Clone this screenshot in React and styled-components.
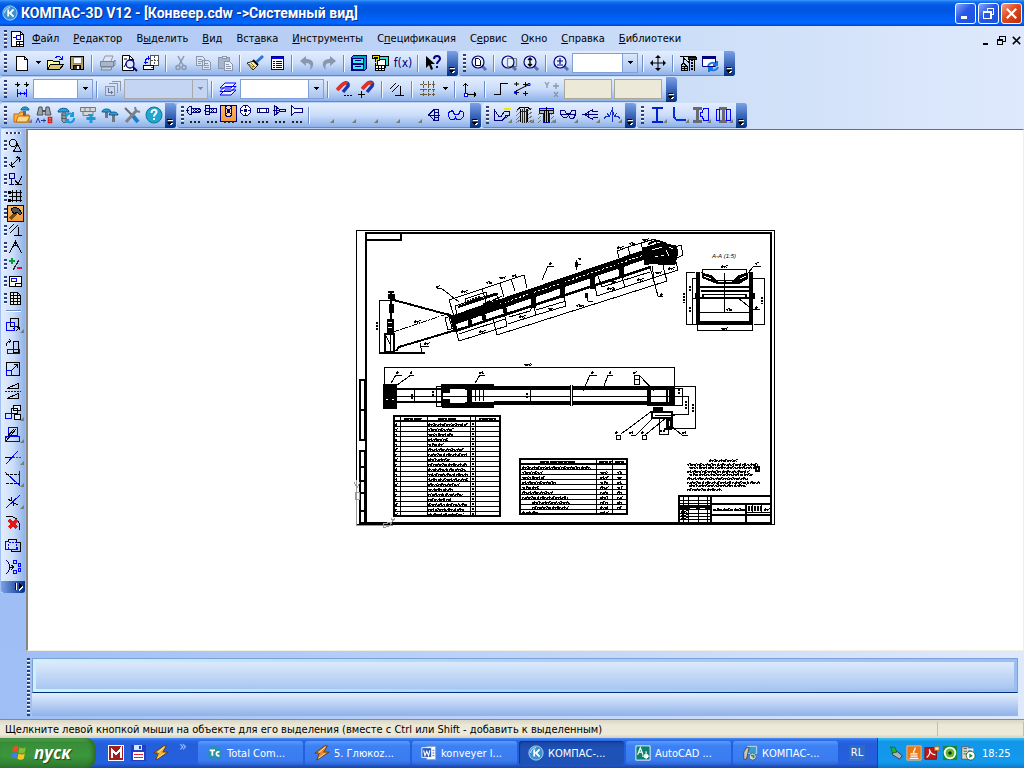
import React from "react";
import styled, { createGlobalStyle, css } from "styled-components";

const GlobalStyle = createGlobalStyle`
  * { box-sizing: border-box; }
  body {
    margin: 0;
    font-family: "DejaVu Sans Condensed", "Noto Sans", sans-serif;
    font-size: 11px;
    color: #000;
    cursor: default;
  }
  button, input, select { font: inherit; color: inherit; }
`;

/* ---------- icons, all on an 18px grid ---------- */

const Svg = styled.svg`
  display: block;
  flex: none;
  overflow: visible;
`;

const Icon = ({ size = 18, smooth, narrow, children }) => (
  <Svg width={narrow ? 15 : size} height={narrow ? 15 : size} viewBox={narrow ? "2 2 15 15" : "0 0 18 18"}
    fill="none" stroke="#000" shapeRendering={smooth ? "auto" : "crispEdges"} aria-hidden="true">
    {children}
  </Svg>
);

const NAVY = "#000080";
const BLUE = "#0000ff";
const GRAY = "#8b97ad";

const lens = (
  <>
    <path d="M11 11l5 5" stroke="#5b6fae" strokeWidth="3" />
    <circle cx="8" cy="8" r="6" fill="#e4f0ff" stroke={NAVY} strokeWidth="1.2" />
  </>
);

const screw = (
  <>
    <path d="M1 6c0-5 11-5 11 0z" fill="#2a9fd8" stroke="#0a5a94" />
    <path d="M5 7h4v8l-2 2-2-2z" fill="#9aa4ad" stroke="#50575e" />
    <path d="M4 9l6 1M4 12l6 1" stroke="#50575e" />
  </>
);

const icons = {
  doc: <Icon><path d="M2.500 1.500h9l3 3v12h-12z" fill="#fff" /><path d="M11.500 1.500v3h3M7.500 11.500h7v5h-7zM7 14.500h7M10.500 11v5" /><path d="M4 7.500h3m0-2h4v4h-4z" stroke={BLUE} /></Icon>,
  newDoc: <Icon><path d="M3.500 2.500h8l3 3v11h-11z" fill="#fff" /><path d="M11.500 2.500v3h3" /></Icon>,
  open: <Icon><path d="M1.500 15.500v-9h5l1 1h6v3" fill="#ffff99" stroke="#000" /><path d="M1.500 15.500l3-5h13l-4 5z" fill="#d8c878" /><path d="M9.500 4c2-3 5-2 6 1M13 5h3V2" stroke={BLUE} /></Icon>,
  save: <Icon><path d="M2.500 2.500h13v13h-12l-1-1z" fill="#b8a05c" /><path d="M5 3h8v6H5z" fill="#fff" stroke="#888" /><path d="M5.500 11.500h7v4h-7z" fill="#333" /><path d="M10 12v3" stroke="#fff" strokeWidth="2" /></Icon>,
  print: <Icon smooth><path d="M5 7l2-5h8l-2 5" fill="#dfe6f3" stroke={GRAY} /><path d="M2.500 7.500h13v5h-13z" fill="#a9b5cb" stroke="#77849c" /><path d="M4 13h10l-1 3H3z" fill="#c4cfe2" stroke="#77849c" /><path d="M16 8l1-2v5l-2 2" stroke="#77849c" /></Icon>,
  preview: <Icon smooth><path d="M2.500 1.500h7l4 4v11h-11z" fill="#fff" /><path d="M9.500 1.500v4h4M4 5h3M4 13l3-5" /><circle cx="10" cy="10" r="4" fill="#d8e8ff" stroke={NAVY} strokeWidth="1.300" /><path d="M13 13l4 4" stroke={NAVY} strokeWidth="2" /></Icon>,
  sheets: <Icon><path d="M8.500 1.500h8v10h-8z" fill="#fff" stroke="#555" /><path d="M12.500 1.500v10M8.500 6.500h8" stroke="#555" strokeDasharray="2 1" /><path d="M1.500 11.500h10v4h-10z" fill="#fff" /><path d="M9 13.500h2" stroke="#e00" /><path d="M3.500 10V7c0-2 1-3 4-3M6 2v4M1.500 8h4" stroke={BLUE} /></Icon>,
  cut: <Icon smooth><path d="M6 2l5 9M12 2L7 11" stroke={GRAY} strokeWidth="1.500" /><circle cx="6" cy="13.500" r="2" stroke={GRAY} strokeWidth="1.500" /><circle cx="12" cy="13.500" r="2" stroke={GRAY} strokeWidth="1.500" /></Icon>,
  copy: <Icon><path d="M2.500 2.500h6l2 2v7h-8zM8.500 6.500h6l2 2v7h-8z" fill="#dbe6f7" stroke={GRAY} /><path d="M4 5.500h4M4 7.500h4M4 9.500h3M10 9.500h4M10 11.500h5M10 13.500h5" stroke={GRAY} /></Icon>,
  paste: <Icon><path d="M2.500 3.500h11v11h-11z" fill="#a9b5cb" stroke={GRAY} /><path d="M6 2h4v2H6zM8.500 7.500h5l3 3v6h-8z" fill="#e6eefb" stroke={GRAY} /><path d="M10 10.500h3M10 12.500h5M10 14.500h5" stroke={GRAY} /></Icon>,
  brush: <Icon smooth><path d="M1 9l7-2 4 4-5 5z" fill="#fff3c0" stroke="#222" /><path d="M3 10l4 3M5 9l4 4M6 15l2-3" stroke="#907010" /><path d="M7 6l5 5" strokeWidth="2" /><path d="M10.500 8L17 2" stroke="#2a75d8" strokeWidth="3" /></Icon>,
  props: <Icon><path d="M3.500 2.500h12v13h-12z" fill="#fff" stroke={NAVY} /><path d="M4 4h11" stroke={BLUE} strokeWidth="2" /><path d="M5 7.500h2M5 9.500h2M5 11.500h2M5 13.500h2M8 7.500h6M8 9.500h6M8 11.500h6M8 13.500h6" stroke={NAVY} /></Icon>,
  undo: <Icon smooth><path d="M2 7l6-5v3c5 0 8 2 7 7-1 2-2 3-3 4 1-4 1-7-4-7v3z" fill={GRAY} stroke="none" /></Icon>,
  redo: <Icon smooth><path d="M16 7l-6-5v3C5 5 2 7 3 12c1 2 2 3 3 4-1-4-1-7 4-7v3z" fill={GRAY} stroke="none" /></Icon>,
  cabinet: <Icon><path d="M1.500 3.500l2-2h13v13l-2 2h-13z" fill="#00a0b0" stroke={NAVY} /><path d="M2.500 4.500h11v5h-11zM2.500 10.500h11v5h-11z" fill="#2ff0f0" stroke={NAVY} /><path d="M5 6.500h6M5 12.500h6" stroke={NAVY} /></Icon>,
  vars: <Icon><path d="M7.500 2.500h9v9h-9z" fill="#2ee0e0" /><path d="M5.500 5.500h8v8h-8z" fill="#fff" /><path d="M3.500 11.500h9v5h-9zM3.500 14.500h9M6.500 11.500v5M9.500 11.500v5" fill="#fff" /><path d="M1 5V2h5v3H4v3M4 9v2" stroke="#000" strokeWidth="3" /><path d="M1 4V2h5v3H4v3M4 9v2" stroke="#f0e000" /></Icon>,
  helpArrow: <Icon smooth><path d="M2 2v12l3-3 2 5 2-1-2-5h4z" fill="#000" stroke="none" /><path d="M10 5c0-4 6-4 6 0 0 2-3 2-3 5M13 12v2" stroke={NAVY} strokeWidth="2" /></Icon>,
  zoomDoc: <Icon smooth>{lens}<path d="M5.500 4.500h3l2 2v5h-5z" fill="#fff" /></Icon>,
  zoomArea: <Icon smooth>{lens}<path d="M7.500 4.500h9v8h-9z" stroke="#222" strokeWidth="1.200" strokeDasharray="1 1" /></Icon>,
  zoomDyn: <Icon smooth>{lens}<path d="M8 4v8M6 6l2-2 2 2M6 10l2 2 2-2" strokeWidth="1.400" /></Icon>,
  zoomPlus: <Icon smooth>{lens}<path d="M5 7h6M8 4v6M5 11h6" stroke={NAVY} strokeWidth="1.200" /></Icon>,
  pan: <Icon smooth><path d="M9 2v14M2 9h14" /><path d="M9 1l3 3H6zM9 17l3-3H6zM1 9l3-3v6zM17 9l-3-3v6z" fill="#000" stroke="none" /></Icon>,
  crane: <Icon><path d="M1 2.500h16M10.500 3v14M15.500 3v14M4.500 3v6M4 4l7 5" /><path d="M9 3h8v2H9z" fill="#333" /><path d="M13 5v12" strokeDasharray="2 1" strokeWidth="2" /><path d="M2.500 12.500h6v4h-6zM5.500 12.500v4M2 14.500h7M4 9l-2 3M4 9l4 3" /></Icon>,
  refreshWin: <Icon smooth><path d="M1.500 2.500h13v10h-13z" fill="#fff" stroke={NAVY} /><path d="M1 3.500h14" stroke="#000080" strokeWidth="3" /><path d="M7 12a5 5 0 0 1 8-2M17 13a5 5 0 0 1-8 2M16 7v4h-4M8 18v-4h4" stroke="#1878e0" strokeWidth="2" /></Icon>,
  step: <Icon><path d="M4.500 2v5M2 4.500h5M13.500 2v5M11 4.500h5M4 4h1v1H4zM13 4h1v1h-1z" /><path d="M4.500 9v8M13.500 9v8M5 13.500h8M7.500 12v3M11.500 12v3" stroke={BLUE} /></Icon>,
  views: <Icon><path d="M7.500 1.500h9v9M4.500 3.500h9v9" stroke={GRAY} /><path d="M1.500 6.500h9v9h-9z" fill="#c8d6ef" stroke={GRAY} /><path d="M4.500 8v4.500h4M7.500 11v3" stroke="#66728a" /></Icon>,
  layers: <Icon smooth><path d="M6 10h11l-5 5H1zM6 6.500h11l-5 5H1zM6 3h11l-5 5H1z" fill="#eef4ff" stroke={BLUE} /></Icon>,
  magnetDots: <Icon smooth><path d="M3 9l4-4c3-3 7-3 6 1l-5 6" stroke="#1838b0" strokeWidth="3.500" /><path d="M2 10l5-5c2-2 4-2 5-1" stroke="#e83020" strokeWidth="3.500" /><path d="M9 15.500h2M12 15.500h2M15 15.500h2" /></Icon>,
  magnetPlus: <Icon smooth><path d="M6 8l4-4c3-3 7-2 5 2l-5 6" stroke="#1838b0" strokeWidth="3.500" /><path d="M5 9l5-5c2-2 4-1 5 0" stroke="#e83020" strokeWidth="3.500" /><path d="M4.500 11v7M1 14.500h7" /></Icon>,
  parallel: <Icon smooth><path d="M2 9l6-6M4 12l7-7M12.500 6v9M7 15.500h9" /></Icon>,
  grid: <Icon><path d="M1 4.500h16M1 9.500h16M1 14.500h16M4.500 1v16M9.500 1v16M14.500 1v16" stroke="#685a3a" strokeDasharray="3 1" /></Icon>,
  axes: <Icon><path d="M4.500 3v12M4 14.500h11M2 5.500h1M3 4.500h3M6 5.500h1M13.500 12v5M14.500 13v3" /><path d="M3.500 13.500h3v3h-3z" fill="#fff" stroke={BLUE} /></Icon>,
  ortho: <Icon><path d="M3 14.500h6.500v-11h7" /></Icon>,
  snaps: <Icon smooth><path d="M3.500 2v4M1 4h5M12.500 2v5M10 4.500h5M3.500 10v5M1 12.500h5M12.500 11v5M10 13.500h5" /><path d="M3 11l12-6" /><path d="M15 3.500h2v2h-2zM1.500 11.500h2v2h-2z" stroke={BLUE} /></Icon>,
  xy: <Icon smooth><path d="M1 2l2 3 2-3M3 5v3M12 3v6M9 6h6M10 12l4 5M14 12l-4 5" stroke={GRAY} strokeWidth="1.300" /></Icon>,
  libFolder: <Icon smooth><path d="M1 16V8h5l1-2h4v3h5v7z" fill="#ffb14a" stroke="#c56a00" /><path d="M11.500 5v6" stroke="#666" strokeWidth="3" /><path d="M8 4c0-4 8-4 8 0z" fill="#2a9fd8" stroke="#0a5a94" /><path d="M3 16l2-6h12l-3 6z" fill="#ffd78a" stroke="#c56a00" /></Icon>,
  binoculars: <Icon smooth><path d="M4 1h3l1 8H2zM11 1h3l2 8h-6z" fill="#9ba1a9" stroke="#4c525b" /><path d="M7 5h4" stroke="#4c525b" strokeWidth="2" /><path d="M1 17l2-5 2 5M6 14.500h5M9 12.500v4" stroke="#1838b0" /><path d="M13.500 11.500h3v5h-3zM13 14h3" stroke="#e02010" strokeWidth="1.600" /></Icon>,
  screwRefresh: <Icon smooth>{screw}<path d="M9 11a4 4 0 0 1 7-2M17 12a4 4 0 0 1-7 3M16 6v4h-3M9 17v-3h3" stroke="#1c98d8" strokeWidth="2" /></Icon>,
  bricks: <Icon smooth><path d="M1.500 1.500h15v4h-15zM6 1.500v4M11 1.500v4M4 5.500h10v4H4z" fill="#d4d6d8" stroke="#74797f" /><path d="M9 9h3v8" stroke="#74797f" strokeWidth="2" /><path d="M12 8v9M7.500 12.500h9" stroke="#1c98d8" strokeWidth="3" /></Icon>,
  screws: <Icon smooth><path d="M5.500 6v6M12.500 9v7" stroke="#70777e" strokeWidth="3" /><path d="M1 6c0-4 9-4 9 0zM8 9c0-4 9-4 9 0z" fill="#2a9fd8" stroke="#0a5a94" /></Icon>,
  tools: <Icon smooth><path d="M2 2l7 7" stroke="#666c74" strokeWidth="2" /><path d="M10 10l5 6" stroke="#1c80c8" strokeWidth="4" /><path d="M3 16L14 4" stroke="#7b828a" strokeWidth="3" /><path d="M12 1l1 4 4 1" stroke="#7b828a" strokeWidth="2" /></Icon>,
  help: <Icon smooth><circle cx="9" cy="9" r="8" fill="#20a8d0" stroke="#0c7898" /><path d="M6.500 7c0-4 5-4 5-1 0 2-2.500 2-2.500 4.500M9 12v2" stroke="#fff" strokeWidth="2" /></Icon>,
};

const boltShapes = [
  <path key="p" d="M6.500 2.500h-2l-2 2v4l2 2h2zM6.500 4.500h8l1 2-1 2h-8M1 6.500h3M8 5l3 3M11 5l3 3M11 5l-3 3M14 5l-3 3" stroke={NAVY} />,
  <path key="p" d="M3.500 1.500h4v9h-4zM3 4.500h4M3 7.500h4M7.500 4.500h7v4h-7M9 5l3 3M12 5l-3 3M2 6.500h2" stroke={NAVY} />,
  <path key="p" d="M7.500 1.500h4l1 2v7l-1 2h-4l-1-2v-7zM7 4l5 6M12 4l-5 6M8.500 5.500h2v3h-2z" stroke={NAVY} fill="#f7d8a0" />,
  <g key="p" stroke={NAVY}><path d="M7.500 1.500h4l3 3v4l-3 3h-4l-3-3v-4z" fill="#fff" /><path d="M4 6.500h3M12 6.500h3M9.500 1v3M9.500 9v3" /><path d="M8.500 5.500h2v2h-2z" fill={NAVY} /></g>,
  <path key="p" d="M4.500 4.500h11v4h-11zM6.500 4.500v4M13.500 4.500v4" stroke={NAVY} fill="#fff" />,
  <path key="p" d="M4.500 1.500v10l5-4h6v-2h-6zM3 6.500h7M6.500 3v7" stroke={NAVY} />,
  <path key="p" d="M4.500 1.500l3 3h8v4h-8l-3 3z" stroke={NAVY} fill="#eef4ff" />,
];

const gearShapes = [
  <g key="p" stroke={NAVY}><path d="M1.500 3v11h8l4-5h3V5h-5l-3 5h-3l-4-6M9.500 14l7-5" /><path d="M11 3h7" stroke="#f0e800" strokeWidth="2" /></g>,
  <g key="p"><path d="M1 6l4-4M1 10l4-4M1 14l4-4M1 17l4-3M13 5l4-3M13 9l4-3M13 13l4-3M13 17l4-3" stroke="#777" /><path d="M5.500 3v13M12.500 3v13M2 4c3-4 11-4 14 0" /><path d="M9.500 1v16M7.500 3v14M11.500 3v14M6 5.500h7" stroke="#222" /></g>,
  <g key="p"><path d="M1 9l3-3M1 13l3-3M1 17l3-3M14 9l3-3M14 13l3-3M14 17l3-3" stroke="#777" /><path d="M2.500 2.500h14v5h-4v9h-6v-9h-4z" fill="#b7bac0" stroke={BLUE} /><path d="M9.500 1v16M7.500 4v12M11.500 4v12M3 4.500h13" /></g>,
  <path key="p" d="M1.500 4.500h4l2 3h4l1-3h4v4l-2 4h-3l-2-3-2 2h-3l-3-3zM1 8.500h16" stroke={NAVY} />,
  <path key="p" d="M1 8.500h16M3.500 8.500l8-5v2M3.500 8.500l8 5v-2M7.500 6v5M12 5.500h5M12 11.500h5" stroke={NAVY} />,
  <path key="p" d="M1 13l2-3 3 1 3-7 3 7 3-1 2 3M9.500 1v15M4 7l3 4M14 7l-3 4" stroke="#1030c8" />,
];

const profileShapes = [
  <path key="p" d="M4 2h11M4 16h11M9 2v14" stroke="#0020d8" strokeWidth="2" />,
  <path key="p" d="M4 1v8c0 3 2 5 4 5h8" stroke="#0030d8" strokeWidth="2" />,
  <g key="p"><path d="M1 2.500h9M1 15.500h9M5.500 2v14" stroke="#6a6a70" strokeWidth="3" /><path d="M8.500 6.500h2l1-4h5v12h-5l-1-4h-2z" stroke={BLUE} /></g>,
  <g key="p"><path d="M5 2.500h8M5 15.500h8M9.500 3v12" stroke="#6a6a70" strokeWidth="3" /><path d="M2.500 3.500h3v11h-3zM12.500 3.500h4v11h-4z" stroke={BLUE} /></g>,
];

const panelShapes = [
  <path key="p" d="M5.500 3.500h3l2 2v3l-2 2h-3l-2-2v-3zM11.500 8.500l-4 7h8z" />,
  <path key="p" d="M5 13L13 5M5.500 9v4M5 13.500h4M13.500 9V5M14 4.500h-4M3 11l4 4M11 3l4 4" />,
  <g key="p"><path d="M3.500 3.500h5v5h-5zM5.500 8v6M3 14.500h5" stroke={NAVY} /><path d="M9 10l3 4 4-8M9 14.500h7" /></g>,
  <path key="p" d="M3 5.500h13M3 9.500h13M3 13.500h13M6.500 3v12M10.500 3v12M14.500 3v12M2.500 4.500h2v2h-2zM2.500 12.500h2v2h-2z" />,
  <g key="p"><path d="M10 9l-6 6" stroke="#7b4b10" strokeWidth="3" /><path d="M5 5l4-2 4 2 3 4-2 2-3-3-3 2z" fill="#555" /></g>,
  <path key="p" d="M3 8l5-5M4 12l8-8M12.500 6v8M8 14.500h8" />,
  <path key="p" d="M9.500 2v3M3.500 15l5-10h2l5 10M5 11l4-4h1l4 4" strokeWidth="1.200" />,
  <g key="p" strokeWidth="2"><path d="M3 6h6M6 3v6" stroke="#00a030" /><path d="M13 5L7 15" stroke="#222" strokeWidth="1.300" /><path d="M11 13h5" stroke="#e81020" /></g>,
  <g key="p"><path d="M3.500 4.500h12v10h-12z" fill="#fff" /><path d="M5.500 6.500h5v3h-5z" stroke={BLUE} /><path d="M9.500 11.500h6v3h-6z" /></g>,
  <path key="p" d="M4.500 3.500h7l3 3v9h-10zM4 6.500h11M4 9.500h11M4 12.500h11M7.500 4v12M11.500 4v12" fill="#eee" />,
];

const editShapes = [
  <g key="p"><path d="M6.500 2.500h8v8h-8zM9 13l3-3" /><path d="M2.500 6.500h8v8h-8z" stroke={BLUE} /><path d="M12 15l4-4M13 11.500h3M15.500 11v3" /></g>,
  <g key="p"><path d="M9.500 3.500h5v11h-5z" /><path d="M3.500 11.500h12v4h-12z" stroke={BLUE} /><path d="M2 8c0-4 2-5 5-5M5 1l2 2-2 2" /></g>,
  <g key="p"><path d="M2.500 2.500h13v13h-13z" /><path d="M2.500 10.500h5v5h-5z" stroke={BLUE} /><path d="M7 11l6-6M10 4.500h3.500V8" /></g>,
  <g key="p"><path d="M3 6.500l11-5v5zM3 16.500l11-5v5z" /><path d="M1 9.500h16" stroke={BLUE} strokeDasharray="2 1" /></g>,
  <g key="p"><path d="M9.500 1.500h7v5h-7zM7.500 4.500h6v5h-6zM10.500 10.500h6v5h-6z" fill="#e6effd" /><path d="M1.500 9.500h6v5h-6z" stroke={BLUE} /></g>,
  <g key="p"><path d="M4.500 1.500h9v8h-9zM1.500 10.500h14v5h-14z" stroke={BLUE} /><path d="M2 15L12 3M2 12l8-9" /></g>,
  <g key="p"><path d="M2 16L14 3" stroke={BLUE} /><path d="M1 9.500h7" /><path d="M9 9.500h8" stroke="#b01010" strokeDasharray="2 1" /></g>,
  <g key="p"><path d="M1 2l15 14M15.500 1v15" stroke={BLUE} /><path d="M2 4.500h13M2 13.500h13" strokeDasharray="3 1" /></g>,
  <g key="p"><path d="M2 16L16 3" stroke={BLUE} /><path d="M4 7l3 2M7.500 5v4M9.500 10v4M10 11l4 2" /></g>,
  <g key="p"><path d="M2 2.500h6l4 2 3 4 1 7" /><path d="M5 6l8 8M13 6l-8 8" stroke="#e01818" strokeWidth="3" /></g>,
  <g key="p"><path d="M4.500 3.500h8v3h4v9h-9v-2h-6v-8h3z" /><path d="M4 5.500h-2.500v8h12v-3" stroke={BLUE} /><path d="M4.500 6.500h8v7h-8z" stroke={BLUE} strokeDasharray="2 1" /></g>,
  <g key="p"><path d="M2 2c5 4 5 10 0 14" stroke={NAVY} /><path d="M5 9.500h5M7.500 7l2 2-2 3" /><path d="M9.500 2.500h3v3h-3zM14.500 5.500h2v3h-2zM14.500 10.500h2v3h-2zM9.500 12.500h3v3h-3z" stroke={BLUE} /></g>,
];

/* ---------- window frame ---------- */

const Desktop = styled.div`
  display: flex;
  flex-direction: column;
  min-height: 100vh;
  background: linear-gradient(90deg, #9ebef5, #dfe9fd);
`;

const TitleBar = styled.header`
  display: flex;
  align-items: center;
  height: 26px;
  padding: 0 2px;
  gap: 3px;
  color: #fff;
  background: linear-gradient(#3b98ff 0, #1270ec 8%, #0058e4 20%, #0055e0 40%, #0060f8 70%, #0068ff 88%, #0044c8 100%);
`;

const Title = styled.h1`
  flex: 1;
  margin: 0;
  font-family: Roboto, sans-serif;
  font-size: 14px;
  font-weight: 700;
  white-space: nowrap;
  text-shadow: 1px 1px #0a2a80;
`;

const WindowButtons = styled.div`
  display: flex;
  gap: 2px;
`;

const WindowButton = styled.button`
  width: 21px;
  height: 21px;
  padding: 1px;
  border: 1px solid #fff;
  border-radius: 3px;
  background: ${({ $close }) => $close
    ? "linear-gradient(135deg, #f0a088, #e04820 45%, #b83008)"
    : "linear-gradient(135deg, #8aa8f8, #2858e8 45%, #1a50e0)"};
`;

const MenuBar = styled.nav`
  display: flex;
  align-items: center;
  height: 25px;
`;

const MenuItem = styled.button`
  padding: 0;
  border: 0;
  margin-right: 14px;
  background: none;
  white-space: nowrap;
  u { text-underline-offset: 1px; }
`;

const DocBadge = styled.span`
  padding-right: 5px;
`;

const MdiButtons = styled.div`
  display: flex;
  margin-left: auto;
  padding-top: 4px;
`;

const MdiButton = styled.button`
  width: 15px;
  height: 15px;
  padding: 2px;
  border: 0;
  background: none;
`;

const Docks = styled.div`
  background: linear-gradient(90deg, #adc7f4, #b9cff6 30%, #cfe0f8 72%, #dfe9fd);
`;

/* ---------- toolbars ---------- */

const dots = css`
  background: repeating-linear-gradient(#27407a 0 2px, #fff 2px 3px, transparent 3px 4px);
`;

const Grip = styled.i`
  flex: none;
  width: 3px;
  height: 18px;
  margin: 0 ${({ $wide }) => ($wide ? 4 : 2)}px 0 4px;
  ${dots}
`;

const ToolRow = styled.div`
  display: flex;
  gap: 1px;
  height: 26px;
`;

const Toolbar = styled.div`
  display: flex;
  align-items: center;
  height: 25px;
  border-radius: 3px;
  border-bottom: 1px solid #6488c4;
  background: linear-gradient(#e3eefe, #cbddf9 50%, #8fb2ea);
`;

const ToolButton = styled.button`
  position: relative;
  display: flex;
  align-items: center;
  justify-content: center;
  flex: none;
  width: ${({ $w = 22 }) => $w}px;
  height: 22px;
  padding: 0;
  border: 1px solid ${({ $on }) => ($on ? "#000080" : "transparent")};
  background: ${({ $on }) => ($on ? "linear-gradient(#fdb85e, #f39a3c)" : "none")};
`;

const Corner = styled.i`
  position: absolute;
  right: 0;
  bottom: 2px;
  border-left: 4px solid transparent;
  border-bottom: 4px solid #7d7b70;
`;

const Ellipsis = styled.i`
  position: absolute;
  left: 3px;
  bottom: -2px;
  width: 10px;
  height: 2px;
  background: repeating-linear-gradient(90deg, #222 0 2px, transparent 2px 4px);
`;

const BoltButton = styled(ToolButton)`
  width: 17px;
  height: 17px;
  margin-bottom: 3px;
`;

const Divider = styled.i`
  flex: none;
  width: 2px;
  height: 17px;
  margin: 0 3px;
  border-left: 1px solid #6a8ccb;
  border-right: 1px solid #f1f9ff;
`;

const Gap = styled.i`
  flex: none;
  width: ${({ $w }) => $w}px;
`;

const Cap = styled.button`
  display: flex;
  align-items: flex-end;
  justify-content: center;
  width: 11px;
  height: 25px;
  margin-left: ${({ $ml = 0 }) => $ml}px;
  padding: 0 0 2px;
  border: 0;
  border-radius: 0 3px 3px 0;
  background: linear-gradient(#7ba2e7, #3d68b8 50%, #002f86);
`;

const FxButton = styled(ToolButton)`
  font-size: 12px;
  color: #000080;
`;

const ComboBox = styled.span`
  display: flex;
  flex: none;
  width: ${({ $w }) => $w}px;
  height: 20px;
  border: 1px solid ${({ $off }) => ($off ? "#a8a8a8" : "#7f9fd8")};
  background: ${({ $off }) => ($off ? "#c3d5f3" : "#fff")};
  select {
    flex: 1;
    min-width: 0;
    border: 0;
    background: none;
    appearance: none;
  }
`;

const ComboArrow = styled.span`
  display: flex;
  align-items: center;
  justify-content: center;
  width: 15px;
  border-left: 1px solid ${({ $off }) => ($off ? "#a8a8a8" : "#7f9fd8")};
  background: ${({ $off }) => ($off ? "#c3d5f3" : "linear-gradient(#dbe8fc, #a9c4f0)")};
  pointer-events: none;
`;

const Coord = styled.input`
  width: 48px;
  height: 20px;
  margin-right: 2px;
  border: 1px solid #aca899;
  background: #ece9d8;
`;

const DropArrow = ({ off }) => (
  <Svg width="7" height="4" viewBox="0 0 7 4" shapeRendering="crispEdges" aria-hidden="true">
    <path d="M1 0h5v1H1zM2 1h3v1H2zM3 2h1v1H3z" fill={off ? "#8c8c8c" : "#000"} />
  </Svg>
);

const Combo = ({ w, off, label }) => (
  <ComboBox $w={w} $off={off}>
    <select aria-label={label} disabled={off}><option></option></select>
    <ComboArrow $off={off}><DropArrow off={off} /></ComboArrow>
  </ComboBox>
);

const Tool = ({ name, label, w, on, corner, children }) => (
  <ToolButton $w={w} $on={on} aria-label={label}>
    {children || icons[name]}
    {corner && <Corner />}
  </ToolButton>
);

const EndCap = ({ ml }) => (
  <Cap $ml={ml} aria-label="Параметры панели">
    <Svg width="7" height="7" viewBox="0 0 7 7" shapeRendering="crispEdges">
      <path d="M0 0h5v1H0z" fill="#000" /><path d="M1 1h5v1H1zM2 4h4v1H2zM3 5h2v1H3z" fill="#fff" /><path d="M0 3h5v1H0zM1 4h3v1H1zM2 5h1v1H2z" fill="#000" />
    </Svg>
  </Cap>
);

/* ---------- work area ---------- */

const Work = styled.main`
  display: flex;
  flex: 1;
`;

const Side = styled.aside`
  width: 26px;
  background: #9ebef5;
`;

const SideBar = styled.div`
  display: flex;
  flex-direction: column;
  align-items: flex-end;
  width: 25px;
  padding-top: 3px;
  border-left: 1px solid #9ebef5;
  background: linear-gradient(90deg, #e3eefe, #cbddf9 50%, #8fb2ea);
`;

const TopGrip = styled.i`
  align-self: center;
  width: 15px;
  height: 2px;
  margin-bottom: 3px;
  background: repeating-linear-gradient(90deg, #27407a 0 2px, #fff 2px 3px, transparent 3px 4px);
`;

const PanelRow = styled.div`
  display: flex;
  align-items: center;
  width: 100%;
  height: 17px;
  padding-left: 3px;
`;

const PanelGrip = styled.i`
  width: 3px;
  height: 11px;
  ${dots}
`;

const PanelButton = styled(ToolButton)`
  width: 17px;
  height: 17px;
`;

const EditButton = styled(ToolButton)`
  width: 24px;
`;

const SideRule = styled.i`
  align-self: center;
  width: 15px;
  height: 2px;
  margin: 3px 0 2px;
  border-top: 1px solid #6a8ccb;
  border-bottom: 1px solid #fff;
`;

const SideCap = styled.button`
  display: flex;
  justify-content: flex-end;
  width: 24px;
  height: 12px;
  margin-top: 3px;
  padding: 1px 2px;
  border: 0;
  border-radius: 0 0 3px 3px;
  background: linear-gradient(90deg, #7ba2e7, #3d68b8 50%, #002f86);
`;

const Canvas = styled.section`
  position: relative;
  flex: 1;
  overflow: hidden;
  background: #fff;
  border-top: 1px solid #716f64;
  border-left: 2px solid #8a887c;
  border-right: 1px solid #f1efe2;
  border-bottom: 1px solid #f1efe2;
`;

const Sheet = styled.svg`
  position: absolute;
  left: 324px;
  top: 97px;
`;

/* ---------- drawing sheet ---------- */

const DASHES = ["5 1 3 1 7 1", "2 1 6 1 4 1", "6 1 2 1 8 1", "4 1 9 1", "3 1 5 1 6 1"];

// hand-lettered notes are only a pixel or two tall at this zoom
const Note = ({ x, y, w, i = 0, bold }) => (
  <g>
    <path d={`M${x} ${y}h${w}`} strokeWidth={bold ? 2 : 1} strokeDasharray={DASHES[i % DASHES.length]} />
    <path d={`M${x} ${y + 1}h${w}`} strokeDasharray={bold ? "4 1 2 1" : "2 1 1 1 3 1"} strokeDashoffset={i * 2} />
    <path d={`M${x + 1} ${y - 1}h${w}`} strokeDasharray="1 3 2 5" strokeDashoffset={i * 3} />
  </g>
);

const nameWidths = [39, 25, 25, 20, 15, 35, 39, 22, 39, 38, 40, 40, 31, 25, 35, 24, 40, 36, 35];
const specRows = [25, 20, 22, 35, 17, 31, 46, 38, 36, 17];

const PartsTable = () => (
  <g>
    <path d="M394 415v102M500 415v102M393 416h108M393 421h108M393 516h108" strokeWidth="2" />
    <path d="M400.500 416v100M427.500 416v100M470.500 416v100M475.500 416v100" />
    {nameWidths.map((w, i) => (
      <g key={i}>
        {i < 18 && <path d={`M393 ${426.5 + i * 5}h107`} />}
        <Note x={395} y={424.5 + i * 5} w={2} i={i} />
        <Note x={428} y={424.5 + i * 5} w={w} i={i} />
        <path d={`M472 ${424 + i * 5}h2`} strokeWidth="2" />
      </g>
    ))}
    <Note x={404} y={419} w={18} bold /><Note x={438} y={419} w={19} i={2} bold /><Note x={479} y={419} w={17} i={1} bold />
  </g>
);

const SpecTable = () => (
  <g>
    <path d="M520 458v57M627 458v57M519 459h109M519 464h109M519 514h109" strokeWidth="2" />
    <path d="M596.500 459v55M612.500 459v55" />
    {specRows.map((w, i) => (
      <g key={i}>
        {i < 9 && <path d={`M520 ${469.5 + i * 5}h107`} />}
        <Note x={i === 7 || i === 8 ? 532 : 522} y={467.5 + i * 5} w={w} i={i} />
        {i === 0 && <Note x={546} y={467.5} w={45} i={3} />}
        {i > 0 && <Note x={600} y={467.5 + i * 5} w={8} i={i + 1} />}
        {i > 0 && i < 9 && <Note x={617} y={467.5 + i * 5} w={5} i={i} />}
      </g>
    ))}
    <Note x={540} y={462} w={36} bold /><Note x={599} y={462} w={12} bold /><Note x={615} y={462} w={10} bold />
  </g>
);

const SideView = () => (
  <g>
    {/* mast and guys */}
    <path d="M379 353h46M388 292h6M390.500 292v28" strokeWidth="2" />
    <path d="M388 294h6v4h-6zM389 304h4v8h-4zM387 319h6v13h-6z" fill="#000" />
    <path d="M388 322.500h4M388 327.500h4" stroke="#fff" />
    <path d="M385 334h9v18h-9z" strokeWidth="2" /><path d="M390.500 334v18M386 336l4 8" />
    <path d="M379.500 300v53M379 300.500h11" />
    <path d="M377 322v8" strokeDasharray="2 1" strokeWidth="2" />
    <path d="M390 299l63 17M396 351l3-4 57-17" strokeWidth="2" />
    <path d="M393 332l57-19" strokeDasharray="6 1 2 1" />
    <path d="M420 343l2 9M421 346h8" /><Note x={414} y={321} w={6} /><Note x={424} y={343} w={5} />
    {/* belt and lower chord */}
    <path d="M452 316L645 250l3 8L455 324z" fill="#000" />
    <path d="M500 304L650 253" stroke="#fff" strokeDasharray="2 2" />
    <path d="M525 304l15-4M545 297l35-11M583 285l30-10" stroke="#fff" strokeWidth="2" />
    <path d="M455 331L651 267" strokeWidth="2.600" />
    <path d="M452 317l4 15M468 313l3 14M482 309l3 13M503 302l3 13" strokeWidth="4" />
    <path d="M530 293h8l-3 5v9h-4v-9zM560 283h8l-4 5v9h-4v-9zM589 274h8l-3 5v9h-4v-9zM618 264h8l-3 5v8h-4v-7z" fill="#000" />
    {/* drive head */}
    <path d="M643 248l18-5 15 3 2 6-3 12-12 1-10-2-8 2z" fill="#000" />
    <path d="M648 245c6-6 16-5 24 4" strokeWidth="2" />
    <path d="M652 250l10-3M655 257l3-1M661 255h3M666 250l3 6M669 247l4 2" stroke="#fff" />
    <path d="M675 247l6-2 2 10-6 3" />
    {/* outrigger platform */}
    <path d="M457 314l-2-8 41-13 3 8M465 304v-5l21-7 1 5M484 305l18-9" />
    <path d="M458 307l40-13" strokeWidth="2" />
    <path d="M467 302l14-5" strokeWidth="3" strokeDasharray="2 1" />
    <path d="M484 303l4 7M488 301l4 7M494 299l3 8" strokeWidth="4" />
    {/* dimension chains */}
    <path d="M454 316l-5-16 33-11 18-6 12-4 12-4 3 13M482 289l5 16M500 283l4 14M511 279l4 12" />
    <path d="M456 331l3 10 48-15-3-14M459 334l46-15M493 319l4 16 170-54-2-7M508 324l28-9 30-9-2-8M509 317l21-6 3-6M536 315l-2-9" />
    <path d="M536 310l30-9M595 286l2 10 28-9 28-9 25-8-3-12M598 276l4 11 48-15M625 287l-3-10M654 278l-2-12M665 275l-2-10" />
    <path d="M617 251l3 10M617 251l11-4 13-4 14-4 3 8M628 247l2 8M641 243l2 7" />
    <path d="M445 318l9-3M445 318l3 12 8-3M449 317l3 11" />
    {/* leaders */}
    <path d="M437 288h4l18 14M542 280l6-14h6M650 267l8 29h5M576 264h5M576 260l1 10M585 293l3 8h5" />
    <path d="M576 262v5M586 293v5" strokeWidth="3" />
    <Note x={461} y={291} w={6} /><Note x={486} y={282} w={6} i={1} /><Note x={499} y={277} w={6} i={2} /><Note x={512} y={275} w={5} i={3} />
    <Note x={617} y={247} w={6} /><Note x={629} y={243} w={6} i={1} /><Note x={642} y={239} w={6} i={2} />
    <Note x={479} y={331} w={6} /><Note x={519} y={316} w={6} /><Note x={548} y={308} w={5} i={2} /><Note x={576} y={305} w={8} i={1} />
    <Note x={607} y={288} w={8} /><Note x={611} y={281} w={5} i={2} /><Note x={637} y={279} w={6} /><Note x={655} y={272} w={6} i={2} /><Note x={668} y={268} w={6} />
    <Note x={549} y={263} w={3} /><Note x={578} y={258} w={3} i={2} /><Note x={660} y={294} w={3} /><Note x={436} y={286} w={3} i={3} />
  </g>
);

const SectionView = () => (
  <g>
    <text x="712" y="258" fill="#000" stroke="none" fontSize="6" fontStyle="italic" fontFamily="Liberation Sans, sans-serif">А-А (1:5)</text>
    <path d="M698 272v52M751 272v52" strokeWidth="4" />
    <path d="M696 323h57" strokeWidth="4" />
    <path d="M699 287h51M701 291h48M700 298h50" strokeWidth="2" />
    <path d="M703 294.500h43v3h-43z" strokeWidth="1.500" />
    <path d="M702 273l10 3 4 4h18l4-4 9-3 1 5-8 5h-24l-13-5z" fill="#000" />
    <path d="M704 276l7 3M746 276l-6 3M718 281.500h6M726 281.500h6M719 284.500h12" stroke="#fff" />
    <path d="M724.500 273v40" /><path d="M700 312.500h50M686.500 272v52M692.500 278v46M686 272.500h9M692 278.500h6M686 324.500h10M692 298.500h4M764.500 278v46M753 278.500h11M754 324.500h11M702.500 269v8M746.500 269v8M702 269.500h44M697.500 325v6M752.500 325v6M697 330.500h55" />
    <path d="M748 273l6-7h7M738 298l14 11h8" />
    <path d="M689.500 286v5M689.500 307v5M683.500 293v10M761.500 297v7" strokeWidth="2" strokeDasharray="2 1" />
    <path d="M695 293h3v5h-3zM751 293h3v5h-3z" fill="#000" />
    <Note x={721} y={266} w={6} /><Note x={726} y={309} w={6} i={1} /><Note x={721} y={328} w={6} i={2} /><Note x={755} y={263} w={3} i={1} /><Note x={755} y={307} w={3} />
  </g>
);

const PlanView = () => (
  <g>
    <path d="M384.500 367v18M384 367.500h291M674.500 367v19" /><Note x={524} y={364} w={8} i={2} />
    <path d="M383 384h13v24h-13z" fill="#000" /><path d="M386 399.500h2M392 399.500h2" stroke="#fff" />
    <path d="M397 389h48M397 402h48" strokeWidth="2" /><path d="M397 396.500h275" />
    <path d="M442 384h51v5h-28v-1h-16v4h-7zM442 407h51v-5h-28v1h-16v-4h-7z" fill="#000" />
    <path d="M442 384v23M468 385v21" strokeWidth="2" />
    <path d="M468 387h3v17h-3z" fill="#000" /><path d="M475.500 389v12M479.500 389v12M483.500 389v12" />
    <path d="M494 388h154M494 403h154" strokeWidth="4" />
    <path d="M571.500 385v21" stroke="#fff" strokeWidth="2" /><path d="M570.500 385v21M572.500 385v21" />
    <path d="M414.500 390v12M436.500 386v21M436 386.500h6M436 406.500h6M530.500 390v12" />
    <path d="M412 394v5M433 391v6M527 393v6" strokeWidth="2" strokeDasharray="2 1" />
    {/* drive end */}
    <path d="M649 388h24v16h-24z" strokeWidth="4" /><path d="M667 390v12M670 391h2v10h-2z" strokeWidth="2" />
    <path d="M674 386.500h21.500v42M695 428.500h-26M674 388.500h8v17h-10M674 396.500h14v18h-15" />
    <path d="M654 408h8v2h-8zM652 412h20v6h-20z" strokeWidth="2" /><path d="M667 419h4v8h-4z" strokeWidth="3" /><path d="M664 429h8" strokeWidth="2" />
    <path d="M659.500 418v16h9v-7M655 415.500h20" />
    <path d="M679 389v6M686 401v8M693 404v8M660 431h5" strokeWidth="2" strokeDasharray="2 1" />
    {/* callouts */}
    <path d="M391 383l5-8h6M397 385l14-10h3M475 383l5-8h5M583 391l7-16h7M604 386l4-11h5M634 375h5l15 16M634.500 375.500h5v9h-5zM634 379.500h5" />
    <path d="M652 411l-31 23M652 419l-16 16h-5M666 418l-21 17M671 426l11 9h6M616.500 435.500h4v4h-4zM642.500 435.500h4v4h-4z" />
    <Note x={396} y={372} w={3} /><Note x={410} y={372} w={2} /><Note x={479} y={372} w={5} i={3} /><Note x={591} y={372} w={3} /><Note x={609} y={372} w={2} /><Note x={633} y={372} w={3} i={3} />
    <Note x={615} y={432} w={3} /><Note x={629} y={432} w={4} i={3} /><Note x={641} y={432} w={3} /><Note x={682} y={432} w={4} i={3} />
  </g>
);

const requirements = [
  [709, 28], [687, 71], [689, 66], [687, 62], [689, 64], [687, 61], [687, 73], [689, 57], [687, 35],
];

const TitleBlock = () => (
  <g>
    {requirements.map(([x, w], i) => (
      <Note key={i} x={x} y={460.5 + i * 3.6} w={w} i={i} />
    ))}
    <path d="M755.500 466.500h3v4h-3z" strokeWidth="2" />
    <path d="M678 496h92M679 496v27M711 496v27M711 504h59M711 515h59M746 504v19" strokeWidth="2" />
    <path d="M683.500 496v27M688.500 496v27M698.500 496v27M707.500 496v27M678 500.500h33M678 503.500h33M678 513.500h33M678 516.500h33M678 519.500h33M747 512.500h24M752.500 504v9M761.500 504v9" />
    <path d="M679 505h32v4h-32z" fill="#000" /><path d="M690 508.500h6M700 508.500h5" stroke="#fff" />
    <Note x={713} y={509.5} w={32} i={4} bold /><path d="M748 508.500h13" strokeWidth="5" strokeDasharray="2 1" /><Note x={764} y={509} w={5} />
    <Note x={681} y={511} w={6} /><Note x={681} y={515} w={6} /><Note x={681} y={518} w={6} />
  </g>
);

const Drawing = () => (
  <Sheet width="426" height="304" viewBox="352 227 426 304" fill="none" stroke="#000" shapeRendering="crispEdges" role="img" aria-label="Чертёж конвейера">
    <path d="M356.500 230.500h418v294h-418z" />
    <path d="M366 233h405v290h-405zM366 240h35v-6" strokeWidth="2" />
    <path d="M360 380h5v60h-5zM360 410h5M360 451h5v72h-5zM360 467h5M360 481h5M360 493h5M360 511h5" strokeWidth="2" />
    <path d="M356.500 480v45h36M354 482l3 6 3-6M355 492h4v7h-4zM392 522l-9 2v4l9-3M390 525l5-7M391 518l2 3" stroke="#9a9a9a" />
    <SideView />
    <SectionView />
    <PlanView />
    <PartsTable />
    <SpecTable />
    <TitleBlock />
  </Sheet>
);

/* ---------- bottom panels ---------- */

const PropertyArea = styled.div`
  display: flex;
  gap: 2px;
  padding: 7px 6px 3px 27px;
`;

const PropertyGrip = styled.i`
  width: 3px;
  ${dots}
`;

const PropertyPanel = styled.div`
  flex: 1;
`;

const PropertyFrame = styled.div`
  height: 35px;
  padding: 3px;
  border: 1px solid #7f9fd8;
  border-bottom-color: #00307a;
  background: linear-gradient(90deg, #c8f4ff, #a8d4f6 50%, #9cbdf0);
`;

const PropertyBody = styled.div`
  height: 100%;
  background: linear-gradient(#dce9fc, #a9c6f0);
`;

const PropertyTabs = styled.div`
  height: 23px;
  background: linear-gradient(#e3eefe, #8fb2ea);
`;

const StatusBar = styled.footer`
  display: flex;
  align-items: center;
  height: 19px;
  padding-left: 5px;
  border-top: 1px solid #8a8a80;
  background: linear-gradient(#d9d6c6, #ece9d8 30%, #ece9d8 80%, #d4d0bc);
  white-space: nowrap;
`;

const StatusCell = styled.span`
  width: 87px;
  height: 14px;
  margin-left: auto;
  border-left: 1px solid #c2bfa8;
  border-right: 1px solid #c2bfa8;
`;

/* ---------- taskbar ---------- */

const Taskbar = styled.div`
  display: flex;
  align-items: stretch;
  height: 30px;
  color: #fff;
  background: linear-gradient(#4a8cf4 0, #2a6ae8 8%, #245edb 20%, #2460de 85%, #1a44a8 100%);
`;

const Start = styled.button`
  display: flex;
  align-items: center;
  gap: 5px;
  width: 96px;
  padding: 0 0 0 10px;
  border: 0;
  border-radius: 0 10px 10px 0;
  color: #fff;
  font-family: "Open Sans", sans-serif;
  font-size: 17px;
  font-weight: 700;
  font-style: italic;
  line-height: 20px;
  text-shadow: 1px 1px 1px #1a4a1a;
  background: linear-gradient(#5cae5c 0, #388e38 15%, #3c963c 60%, #2c7a2c 100%);
  box-shadow: inset -3px 0 4px #2a6a2a;
`;

const QuickLaunch = styled.div`
  display: flex;
  align-items: center;
  gap: 5px;
  width: 102px;
  padding-left: 11px;
  button {
    display: flex;
    padding: 0;
    border: 0;
    background: none;
    color: #a8c8ff;
  }
  button:last-child {
    align-self: flex-start;
    padding: 1px 0 0 5px;
    font-size: 14px;
    line-height: 14px;
  }
`;

const Tasks = styled.div`
  display: flex;
  flex: 1;
  gap: 2px;
  padding: 3px 0;
`;

const Task = styled.button`
  display: flex;
  align-items: center;
  gap: 4px;
  flex: 0 1 105px;
  min-width: 0;
  padding: 0 0 0 9px;
  border: 0;
  border-radius: 3px;
  white-space: nowrap;
  color: #fff;
  background: ${({ $on }) => ($on ? "linear-gradient(#1a44a0, #1e52b7 30%)" : "linear-gradient(#5c9cff, #3c81f3 20%, #3a7cf0 80%, #2c64d0)")};
  box-shadow: ${({ $on }) => ($on ? "inset 1px 1px 1px #123584" : "none")};
`;

const Language = styled.span`
  align-self: center;
  width: 16px;
  margin: 0 12px 0 8px;
  text-align: center;
  line-height: 16px;
  background: #316ac5;
`;

const Tray = styled.div`
  display: flex;
  align-items: center;
  gap: 2px;
  width: 147px;
  padding-left: 10px;
  border-left: 1px solid #0a4a9c;
  background: linear-gradient(#3cc0f8 0, #1296e8 12%, #129aee 80%, #0f78c8 100%);
  time { margin-left: 4px; }
`;

const kompas = (
  <Icon size={16} smooth>
    <circle cx="9" cy="9" r="8" fill="#3a90d0" stroke="#b8dcf4" />
    <path d="M7 5v8M13 5L9 9l4 4" stroke="#fff" strokeWidth="2" /><path d="M3 9a6 6 0 0 1 6-6" stroke="#e4f4ff" />
  </Icon>
);

const bolt = (c) => (
  <Icon size={16} smooth><path d="M12 1L1 9h5l-3 8L17 8h-6l4-7z" fill={c} stroke="#5a3a10" /><path d="M13 2L5 9M13 9l-8 6" stroke="#fff0c0" /></Icon>
);

const tasks = [
  { text: "Total Com...", icon: <Icon size={16} smooth><circle cx="9" cy="9" r="8" fill="#2a90b0" stroke="none" /><path d="M3 6h6M6 6v6M14 8c-4-2-5 5 0 4" stroke="#fff" strokeWidth="2" /></Icon> },
  { text: "5. Глюкоz...", icon: bolt("#e88830") },
  { text: "konveyer l...", icon: <Icon size={16} smooth><path d="M6.500 1.500h10v15h-10z" fill="#fff" stroke="#8898b8" /><path d="M1 3h11v11H1z" fill="#2a58b8" stroke="#fff" /><path d="M3 6l1.500 6 2-5 2 5L10 6" stroke="#fff" strokeWidth="1.300" /><path d="M13 6h2M13 9h2M13 12h2" stroke="#2a58b8" /></Icon> },
  { text: "КОМПАС-...", on: true, icon: kompas },
  { text: "AutoCAD ...", icon: <Icon size={16} smooth><path d="M1 1h16v16H1z" fill="#0a8070" stroke="#fff" /><path d="M3 11L6 3l3 8M4 8h4M12.500 7v9M8 12.500h8M11 11h3v3h-3z" stroke="#fff" strokeWidth="1.300" /></Icon> },
  { text: "КОМПАС-...", icon: <Icon size={16} smooth><path d="M6.500 1.500h10v8h-10z" fill="#30a0d8" stroke="#ddd" /><path d="M2 8l3-5h3L5 16H2z" fill="#c8c8c0" stroke="#444" /><circle cx="12" cy="13" r="4" fill="#dde" stroke="#555" /><path d="M10 12h3v3" stroke="#10a030" strokeWidth="2" /></Icon> },
];

const trayIcons = [
  <Icon key="1" size={16} smooth><path d="M5 8l5-1 6 5-3 4-8-5z" fill="#a8b4bc" stroke="#334" /><path d="M3 2l5 1 2 5-5 1z" fill="#20b040" stroke="#107020" /></Icon>,
  <Icon key="2" size={16} smooth><path d="M1 1h16v16H1z" fill="#e87818" stroke="#f8c080" /><path d="M10 3c2 2-3 3-1 6M5 10h8M5 12.500h8M4 15h10" stroke="#fff" strokeWidth="1.400" /></Icon>,
  <Icon key="3" size={16} smooth><path d="M1 3h13v13H1z" fill="#c01818" stroke="#801010" /><path d="M3 14c4-3 4-6 3-9 1 4 4 6 7 6" stroke="#fff" strokeWidth="1.300" /><path d="M12 2h5v4h-5z" fill="#f8e8c0" stroke="#c06010" /></Icon>,
  <Icon key="4" size={16} smooth><path d="M1 1h16v16H1z" fill="#188838" stroke="none" /><circle cx="9" cy="9" r="7" fill="#fff" stroke="none" /><circle cx="9" cy="9" r="5" fill="#60b830" stroke="none" /><circle cx="9" cy="9" r="2" fill="#103810" stroke="none" /></Icon>,
  <Icon key="5" size={16} smooth><path d="M2 2h8v14H2zM4 4h4M4 7h4M4 10h4" fill="#d8d8d0" stroke="#555" /><path d="M8 5h6v3" stroke="#eee" strokeWidth="2" /><circle cx="12" cy="12" r="5" fill="#fff" stroke="#107020" /><path d="M10.500 9.500v5l4-2.500z" fill="#109030" stroke="none" /></Icon>,
];

const menu = [
  ["", "Ф", "айл"], ["", "Р", "едактор"], ["В", "ы", "делить"], ["", "В", "ид"], ["Вст", "а", "вка"],
  ["", "И", "нструменты"], ["С", "п", "ецификация"], ["С", "е", "рвис"], ["", "О", "кно"],
  ["", "С", "правка"], ["", "Б", "иблиотеки"],
];

const App = () => {
  return (
    <Desktop>
      <GlobalStyle />
      <TitleBar>
        {kompas}
        <Title>КОМПАС-3D V12 - [Конвеер.cdw -&gt;Системный вид]</Title>
        <WindowButtons>
          <WindowButton aria-label="Свернуть"><Icon size={17}><path d="M4 13h7" stroke="#fff" strokeWidth="3" /></Icon></WindowButton>
          <WindowButton aria-label="Восстановить"><Icon size={17}><path d="M7.500 6V3.500h7v7H12M7 4h8" stroke="#fff" /><path d="M3.500 7.500h8v7h-8zM3 8h9" stroke="#fff" strokeWidth="1.400" /></Icon></WindowButton>
          <WindowButton $close aria-label="Закрыть"><Icon size={17} smooth><path d="M4 4l10 10M14 4L4 14" stroke="#fff" strokeWidth="2.400" /></Icon></WindowButton>
        </WindowButtons>
      </TitleBar>

      <Docks>
        <MenuBar>
          <Grip />
          <DocBadge>{icons.doc}</DocBadge>
          {menu.map(([a, b, c]) => <MenuItem key={a + b + c}>{a}<u>{b}</u>{c}</MenuItem>)}
          <MdiButtons>
            <MdiButton aria-label="Свернуть документ"><Icon size={11}><path d="M3 15h9" strokeWidth="3" /></Icon></MdiButton>
            <MdiButton aria-label="Восстановить документ"><Icon size={11}><path d="M6 6V2h10v8h-4M6 3h10" strokeWidth="2" /><path d="M2 8h9v8H2z" strokeWidth="2" /></Icon></MdiButton>
            <MdiButton aria-label="Закрыть документ"><Icon size={11} smooth><path d="M3 3l12 12M15 3L3 15" strokeWidth="2.600" /></Icon></MdiButton>
          </MdiButtons>
        </MenuBar>

        <ToolRow>
          <Toolbar>
            <Grip $wide />
            <Tool name="newDoc" label="Создать" />
            <Tool w={11} label="Выбор типа документа"><DropArrow /></Tool>
            <Tool name="open" label="Открыть" /><Tool name="save" label="Сохранить" />
            <Divider />
            <Tool name="print" label="Печать" /><Tool name="preview" label="Просмотр" /><Tool name="sheets" label="Листы" />
            <Divider />
            <Tool name="cut" label="Вырезать" /><Tool name="copy" label="Копировать" /><Tool name="paste" label="Вставить" />
            <Divider />
            <Tool name="brush" label="Копировать свойства" /><Tool name="props" label="Свойства" />
            <Divider />
            <Tool name="undo" label="Отменить" /><Tool name="redo" label="Повторить" />
            <Divider />
            <Tool name="cabinet" label="Менеджер библиотек" /><Tool name="vars" label="Переменные" />
            <FxButton>f(x)</FxButton>
            <Divider />
            <Tool name="helpArrow" label="Что это такое" />
            <EndCap ml={3} />
          </Toolbar>
          <Toolbar>
            <Grip />
            <Tool name="zoomDoc" label="Показать всё" />
            <Divider />
            <Tool name="zoomArea" label="Увеличить рамкой" /><Tool name="zoomDyn" label="Приблизить" />
            <Divider />
            <Tool name="zoomPlus" label="Масштаб крупнее" />
            <Combo w={66} label="Текущий масштаб" />
            <Gap $w={1} /><Divider />
            <Tool name="pan" label="Сдвинуть" />
            <Divider />
            <Tool name="crane" label="Перестроить" /><Tool name="refreshWin" label="Обновить изображение" />
            <EndCap ml={3} />
          </Toolbar>
        </ToolRow>

        <ToolRow>
          <Toolbar>
            <Grip $wide />
            <Tool name="step" label="Шаг курсора" />
            <Combo w={60} label="Шаг курсора" />
            <Divider /><Gap $w={1} />
            <Tool name="views" label="Состояния видов" />
            <Combo w={84} off label="Вид" />
            <Divider />
            <Tool name="layers" label="Состояния слоёв" w={24} />
            <Combo w={84} label="Слой" />
            <Divider /><Gap $w={1} />
            <Tool name="magnetDots" label="Привязки" /><Tool name="magnetPlus" label="Запретить привязки" />
            <Gap $w={1} /><Divider />
            <Tool name="parallel" label="Параметрический режим" />
            <Divider />
            <Tool name="grid" label="Сетка" w={24} />
            <Tool w={11} label="Настройка сетки"><DropArrow /></Tool>
            <Divider />
            <Tool name="axes" label="Локальная система координат" />
            <Divider />
            <Tool name="ortho" label="Ортогональное черчение" /><Tool name="snaps" label="Округление" />
            <Gap $w={9} />
            <Tool name="xy" label="Координаты курсора" />
            <Coord aria-label="Координата X" disabled /><Coord aria-label="Координата Y" disabled />
            <EndCap ml={2} />
          </Toolbar>
        </ToolRow>

        <ToolRow>
          <Toolbar>
            <Grip $wide />
            <Tool name="libFolder" label="Библиотека" corner /><Tool name="binoculars" label="Найти и заменить" /><Tool name="screwRefresh" label="Обновить" />
            <Tool name="bricks" label="Добавить" /><Tool name="screws" label="Крепёж" /><Tool name="tools" label="Настройка" /><Tool name="help" label="Справка" />
            <EndCap />
          </Toolbar>
          <Toolbar>
            <Grip />
            {boltShapes.map((s, i) => (
              <BoltButton key={i} $on={i === 2} aria-label={`Крепёжный элемент ${i + 1}`}>
                <Icon narrow>{s}</Icon><Ellipsis />
              </BoltButton>
            ))}
            <Divider />
            {[1, 2, 3, 4, 5].map((n) => <Tool key={n} corner label={`Набор ${n}`}><Gap $w={1} /></Tool>)}
            <Tool label="Звёздочка"><Icon><path d="M13.500 3v12M13 3.500h-4l-5 5 5 6h4M9.500 3v11M3 9h12M9 6.500h5M9 11.500h5" stroke={NAVY} /></Icon></Tool>
            <Tool label="Ролик"><Icon><path d="M1.500 6.500l4-2 2 4h4l2-4 3 2v4l-3 3h-4l-1-2-1 2h-4l-2-3z" stroke={BLUE} /></Icon></Tool>
            <EndCap ml={3} />
          </Toolbar>
          <Toolbar>
            <Grip />
            {gearShapes.map((s, i) => <Tool key={i} corner label={`Передача ${i + 1}`}><Icon>{s}</Icon></Tool>)}
            <EndCap ml={2} />
          </Toolbar>
          <Toolbar>
            <Grip />
            {profileShapes.map((s, i) => <Tool key={i} corner label={`Профиль ${i + 1}`}><Icon>{s}</Icon></Tool>)}
            <EndCap ml={2} />
          </Toolbar>
        </ToolRow>
      </Docks>

      <Work>
        <Side>
          <SideBar>
            <TopGrip />
            {panelShapes.map((s, i) => (
              <PanelRow key={i}>
                <PanelGrip />
                <PanelButton $on={i === 4} aria-label={`Панель ${i + 1}`}><Icon narrow>{s}</Icon></PanelButton>
              </PanelRow>
            ))}
            <SideRule />
            {editShapes.map((s, i) => (
              <EditButton key={i} aria-label={`Редактирование ${i + 1}`}>
                <Icon>{s}</Icon>
                {(i === 0 || (i > 3 && i < 9)) && <Corner />}
              </EditButton>
            ))}
            <SideCap aria-label="Параметры панели">
              <Svg width="8" height="9" viewBox="0 0 8 9" shapeRendering="crispEdges"><path d="M1 1h1v7H1zM4 1l4 4-4 4z" fill="#fff" /><path d="M0 1h1v7H0zM4 1v7l3-4z" fill="#000" /></Svg>
            </SideCap>
          </SideBar>
        </Side>
        <Canvas><Drawing /></Canvas>
      </Work>

      <PropertyArea>
        <PropertyGrip />
        <PropertyPanel>
          <PropertyFrame><PropertyBody /></PropertyFrame>
          <PropertyTabs />
        </PropertyPanel>
      </PropertyArea>

      <StatusBar>
        Щелкните левой кнопкой мыши на объекте для его выделения (вместе с Ctrl или Shift - добавить к выделенным)
        <StatusCell />
      </StatusBar>

      <Taskbar>
        <Start>
          <Icon size={19} smooth>
            <path d="M3 3q3-2 5 0L7 8Q5 6 2 8z" fill="#f05020" stroke="none" /><path d="M9 3q3 2 6 0l-1 5q-3 2-6 0z" fill="#80c030" stroke="none" />
            <path d="M2 9q3-2 5 0l-1 5q-2-2-5 0z" fill="#3a80f0" stroke="none" /><path d="M8 9q3 2 6 0l-1 5q-3 2-6 0z" fill="#f8c820" stroke="none" />
          </Icon>
          пуск
        </Start>
        <QuickLaunch>
          <button aria-label="Почта"><Icon><path d="M1.500 1.500h15v15h-15z" fill="#a02020" stroke="#fff" /><path d="M4.500 14V5l4.500 5 4.500-5v9" stroke="#fff" strokeWidth="2" /></Icon></button>
          <button aria-label="Дискета"><Icon><path d="M1 1h15v16H1z" fill="#2040c0" stroke="none" /><path d="M4 1h8v5H4z" fill="#dde4ff" stroke="none" /><path d="M9 2h2v3H9z" fill="#2040c0" stroke="none" /><path d="M3 8h11v8H3z" fill="#fff" stroke="none" /><path d="M4 10.500h9M4 13.500h9" stroke="#e02040" /></Icon></button>
          <button aria-label="Winamp">{bolt("#f8b028")}</button>
          <button aria-label="Ещё">»</button>
        </QuickLaunch>
        <Tasks>
          {tasks.map((t, i) => <Task key={i} $on={t.on}>{t.icon}{t.text}</Task>)}
        </Tasks>
        <Language>RL</Language>
        <Tray>
          {trayIcons}
          <time>18:25</time>
        </Tray>
      </Taskbar>
    </Desktop>
  );
};

export default App;
